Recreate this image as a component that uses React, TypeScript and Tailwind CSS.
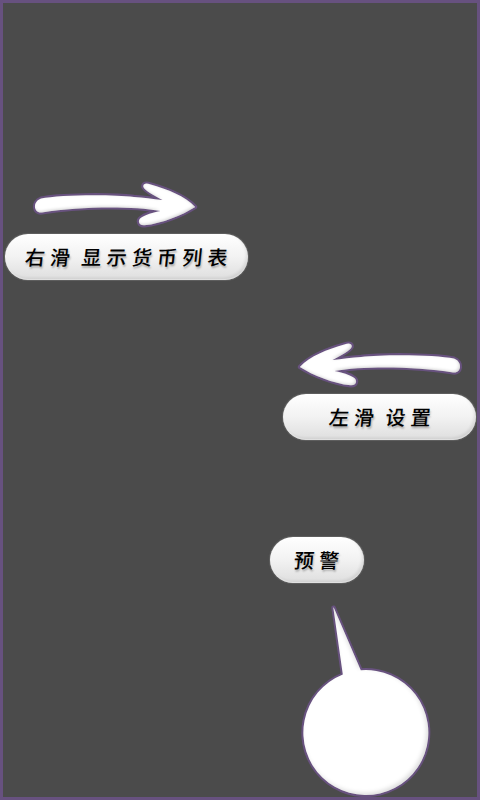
import React from "react";

const labelFont =
  "font-['Noto_Sans_CJK_SC',sans-serif] font-medium text-[20px] leading-[46px] tracking-[5.2px] text-black whitespace-nowrap [word-spacing:-3.5px] [text-shadow:1px_2px_2px_rgba(0,0,0,0.28)]";

function Pill({ children, className }: { children: React.ReactNode; className: string }) {
  return (
    <div
      className={`h-[46px] shrink-0 rounded-full bg-linear-to-b from-white via-[#f2f2f2] to-[#dedede] shadow-[0_0_1px_1px_rgba(125,125,125,0.45),inset_-2px_-2px_3px_rgba(0,0,0,0.09),inset_0_-1px_1px_rgba(255,255,255,0.7)] ${labelFont} ${className}`}
    >
      <span className="inline-block -skew-x-6">{children}</span>
    </div>
  );
}

function Arrow({ id, flipped = false }: { id: string; flipped?: boolean }) {
  const shape =
    "M12 34.2 C3.6 35.4 2 23.6 11 20.3 C28 16.3 82 16 104 18.6 C113 19.4 123 20.2 132.5 21.8 C125 17.6 114 12 113.3 8.5 C112.8 5 116.6 4.6 120 6 C138 11 155 18 165.2 28.6 C152 37 132 45 114.5 47 C109 47.5 107 42.4 111 39.5 C115 36.4 123 34 130.5 32.6 C101 27.6 50 28 12 34.2 Z";
  return (
    <svg width="170" height="52" viewBox="0 0.7 170 52" className="shrink-0">
      <defs>
        <filter id={id} x="-10%" y="-20%" width="120%" height="140%">
          <feOffset in="SourceAlpha" dx={flipped ? 1 : -1} dy="-1.5" result="offset" />
          <feGaussianBlur in="offset" stdDeviation="1.6" result="soft" />
          <feComposite in="SourceAlpha" in2="soft" operator="out" result="edge" />
          <feFlood floodColor="#777777" floodOpacity="0.45" />
          <feComposite in2="edge" operator="in" result="shade" />
          <feMerge>
            <feMergeNode in="SourceGraphic" />
            <feMergeNode in="shade" />
          </feMerge>
        </filter>
      </defs>
      <g transform={flipped ? "translate(170 0) scale(-1 1)" : undefined}>
        <path d={shape} fill="none" stroke="#68527f" strokeWidth="4.2" strokeLinejoin="round" />
        <path d={shape} fill="white" filter={`url(#${id})`} />
      </g>
    </svg>
  );
}

function Bubble() {
  const shape = "M33.3 9.5 Q33.8 9 34.4 11 L60.8 72.3 A62.5 62.5 0 1 1 42.8 76.5 Z";
  return (
    <svg width="136" height="199" viewBox="0 0 136 199" className="shrink-0">
      <defs>
        <filter id="bubbleShade" x="-5%" y="-5%" width="110%" height="110%">
          <feOffset in="SourceAlpha" dx="-2" dy="-2" result="offset" />
          <feGaussianBlur in="offset" stdDeviation="2" result="soft" />
          <feComposite in="SourceAlpha" in2="soft" operator="out" result="edge" />
          <feFlood floodColor="#777777" floodOpacity="0.35" />
          <feComposite in2="edge" operator="in" result="shade" />
          <feMerge>
            <feMergeNode in="SourceGraphic" />
            <feMergeNode in="shade" />
          </feMerge>
        </filter>
      </defs>
      <path d={shape} fill="none" stroke="#68527f" strokeWidth="4" strokeLinejoin="round" />
      <path d={shape} fill="white" filter="url(#bubbleShade)" />
    </svg>
  );
}

export default function App() {
  return (
    <main className="flex h-[800px] w-[480px] flex-col overflow-hidden border-[3px] border-[#67517f] bg-[#4b4b4b]">
      <section className="mt-[176px] flex flex-col items-start gap-[3px]">
        <div className="ml-[27px] flex">
          <Arrow id="rightArrowShade" />
        </div>
        <Pill className="ml-[2px] w-[243px] pl-[20px]">右滑 显示货币列表</Pill>
      </section>
      <section className="mt-[59px] flex flex-col items-end gap-[3px]">
        <div className="mr-[12px] flex">
          <Arrow id="leftArrowShade" flipped />
        </div>
        <Pill className="mr-[1px] w-[193px] pl-[46px]">左滑 设置</Pill>
      </section>
      <Pill className="mt-[97px] ml-[267px] w-[94px] pl-[24px]">预警</Pill>
      <div className="mt-[15px] ml-[297px] flex">
        <Bubble />
      </div>
    </main>
  );
}
